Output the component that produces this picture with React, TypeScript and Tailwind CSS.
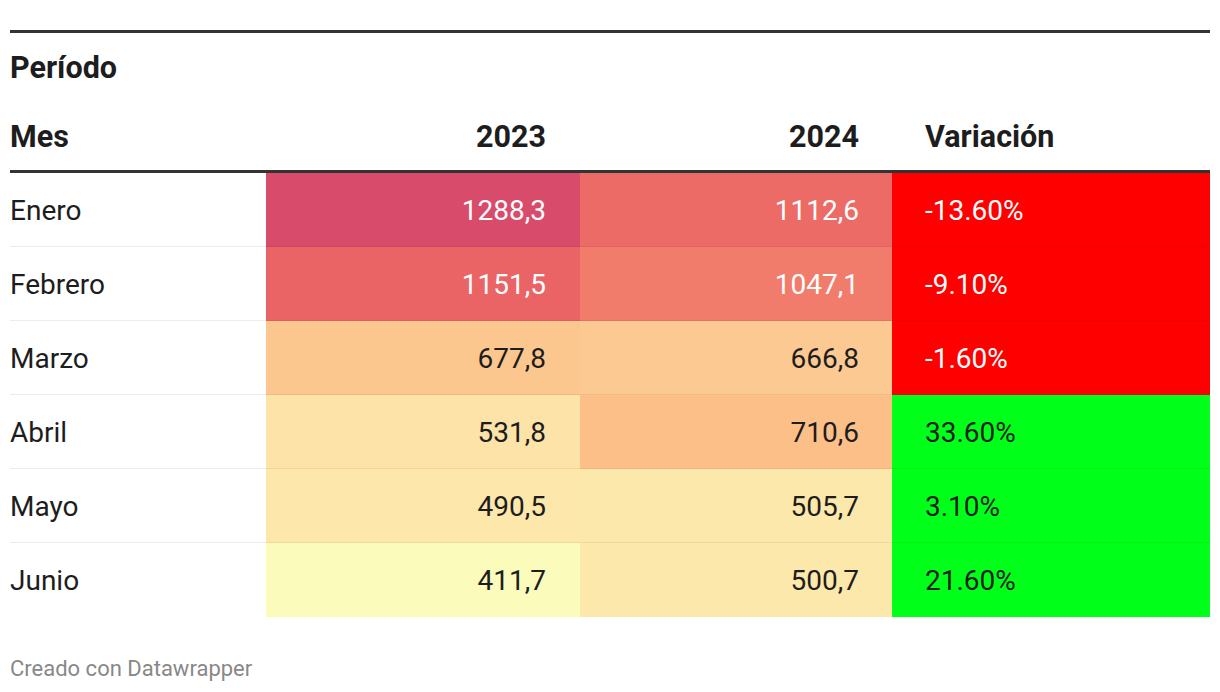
import React from 'react';

type Row = {
  mes: string;
  a: string;
  aBg: string;
  aLight: boolean;
  b: string;
  bBg: string;
  bLight: boolean;
  v: string;
  up: boolean;
};

const rows: Row[] = [
  { mes: 'Enero', a: '1288,3', aBg: 'bg-[#d84b6a]', aLight: true, b: '1112,6', bBg: 'bg-[#ec6b67]', bLight: true, v: '-13.60%', up: false },
  { mes: 'Febrero', a: '1151,5', aBg: 'bg-[#eb6465]', aLight: true, b: '1047,1', bBg: 'bg-[#f27c6b]', bLight: true, v: '-9.10%', up: false },
  { mes: 'Marzo', a: '677,8', aBg: 'bg-[#fcc78f]', aLight: false, b: '666,8', bBg: 'bg-[#fcc992]', bLight: false, v: '-1.60%', up: false },
  { mes: 'Abril', a: '531,8', aBg: 'bg-[#fde3a8]', aLight: false, b: '710,6', bBg: 'bg-[#fdbf88]', bLight: false, v: '33.60%', up: true },
  { mes: 'Mayo', a: '490,5', aBg: 'bg-[#fde7ab]', aLight: false, b: '505,7', bBg: 'bg-[#fde8ac]', bLight: false, v: '3.10%', up: true },
  { mes: 'Junio', a: '411,7', aBg: 'bg-[#fbfbbb]', aLight: false, b: '500,7', bBg: 'bg-[#fde8ac]', bLight: false, v: '21.60%', up: true },
];

export default function App() {
  return (
    <div className="bg-white w-[1220px] h-[692px] px-[10px] pt-[30px] text-[#1d1d1d]" style={{ fontFamily: 'Roboto, "Liberation Sans", sans-serif' }}>
      <div className="border-t-[3px] border-[#333]">
        <div className="h-[70px] flex items-center text-[30.5px] font-bold">Período</div>
        <div className="grid grid-cols-[256px_314px_312px_318px] h-[70px] items-center text-[30.5px] font-bold border-b-[3px] border-[#333]">
          <div>Mes</div>
          <div className="text-right pr-[34px]">2023</div>
          <div className="text-right pr-[33px]">2024</div>
          <div className="pl-[33px]">Variación</div>
        </div>
        {rows.map((r, i) => (
          <div key={r.mes} className="grid grid-cols-[256px_314px_312px_318px] h-[74px] text-[28px]">
            <div className={`flex items-center pt-[2px] ${i < rows.length - 1 ? 'border-b border-[#ececec]' : ''}`}>{r.mes}</div>
            <div className={`flex items-center justify-end pt-[2px] pr-[34px] ${r.aBg} ${r.aLight ? 'text-white' : ''} ${i < rows.length - 1 ? 'border-b border-black/[0.06]' : ''}`}>{r.a}</div>
            <div className={`flex items-center justify-end pt-[2px] pr-[33px] ${r.bBg} ${r.bLight ? 'text-white' : ''} ${i < rows.length - 1 ? 'border-b border-black/[0.06]' : ''}`}>{r.b}</div>
            <div className={`flex items-center pt-[2px] pl-[33px] ${r.up ? 'bg-[#00ff19]' : 'bg-[#ff0000] text-white'} ${i < rows.length - 1 ? 'border-b border-black/[0.06]' : ''}`}>{r.v}</div>
          </div>
        ))}
      </div>
      <div className="mt-[39px] text-[22px] leading-[26px] text-[#888]">Creado con Datawrapper</div>
    </div>
  );
}
